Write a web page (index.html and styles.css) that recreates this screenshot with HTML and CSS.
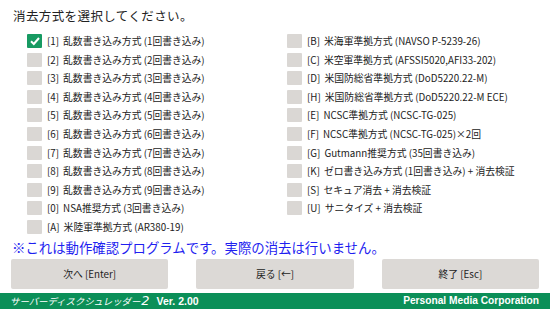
FILE: index.html
```html
<!DOCTYPE html>
<html lang="ja">
<head>
  <meta charset="UTF-8">
  <meta name="viewport" content="width=device-width, initial-scale=1.0">
  <title>消去方式の選択 – サーバーディスクシュレッダー2</title>
  <link rel="stylesheet" href="styles.css">
</head>
<body>
  <div class="screen">
    <h1 class="title">消去方式を選択してください。</h1>

    <div class="options">
      <ul class="col">
        <li class="opt checked"><span class="box"><svg viewBox="0 0 14 14" width="14" height="14"><polyline points="3,7.2 5.8,10 11,4" fill="none" stroke="#fff" stroke-width="2"/></svg></span><span class="key">[1]</span>乱数書き込み方式 (1回書き込み)</li>
        <li class="opt"><span class="box"></span><span class="key">[2]</span>乱数書き込み方式 (2回書き込み)</li>
        <li class="opt"><span class="box"></span><span class="key">[3]</span>乱数書き込み方式 (3回書き込み)</li>
        <li class="opt"><span class="box"></span><span class="key">[4]</span>乱数書き込み方式 (4回書き込み)</li>
        <li class="opt"><span class="box"></span><span class="key">[5]</span>乱数書き込み方式 (5回書き込み)</li>
        <li class="opt"><span class="box"></span><span class="key">[6]</span>乱数書き込み方式 (6回書き込み)</li>
        <li class="opt"><span class="box"></span><span class="key">[7]</span>乱数書き込み方式 (7回書き込み)</li>
        <li class="opt"><span class="box"></span><span class="key">[8]</span>乱数書き込み方式 (8回書き込み)</li>
        <li class="opt"><span class="box"></span><span class="key">[9]</span>乱数書き込み方式 (9回書き込み)</li>
        <li class="opt"><span class="box"></span><span class="key">[0]</span>NSA推奨方式 (3回書き込み)</li>
        <li class="opt"><span class="box"></span><span class="key">[A]</span>米陸軍準拠方式 (AR380-19)</li>
      </ul>
      <ul class="col">
        <li class="opt"><span class="box"></span><span class="key">[B]</span>米海軍準拠方式 (NAVSO P-5239-26)</li>
        <li class="opt"><span class="box"></span><span class="key">[C]</span>米空軍準拠方式 (AFSSI5020,AFI33-202)</li>
        <li class="opt"><span class="box"></span><span class="key">[D]</span>米国防総省準拠方式 (DoD5220.22-M)</li>
        <li class="opt"><span class="box"></span><span class="key">[H]</span>米国防総省準拠方式 (DoD5220.22-M ECE)</li>
        <li class="opt"><span class="box"></span><span class="key">[E]</span>NCSC準拠方式 (NCSC-TG-025)</li>
        <li class="opt"><span class="box"></span><span class="key">[F]</span>NCSC準拠方式 (NCSC-TG-025)×2回</li>
        <li class="opt"><span class="box"></span><span class="key">[G]</span>Gutmann推奨方式 (35回書き込み)</li>
        <li class="opt"><span class="box"></span><span class="key">[K]</span>ゼロ書き込み方式 (1回書き込み) + 消去検証</li>
        <li class="opt"><span class="box"></span><span class="key">[S]</span>セキュア消去 + 消去検証</li>
        <li class="opt"><span class="box"></span><span class="key">[U]</span>サニタイズ + 消去検証</li>
      </ul>
    </div>

    <p class="notice">※これは動作確認プログラムです。実際の消去は行いません。</p>

    <div class="buttons">
      <button type="button">次へ [Enter]</button>
      <button type="button">戻る [←]</button>
      <button type="button">終了 [Esc]</button>
    </div>

    <footer class="footer">
      <span class="product"><span class="name">サーバーディスクシュレッダー<span class="two">2</span></span><span class="ver">Ver. 2.00</span></span>
      <span class="company">Personal Media Corporation</span>
    </footer>
  </div>
</body>
</html>
```

FILE: styles.css
```css
body {
  margin: 0;
  padding: 0;
  background-color: #fff;
  font-family: "Noto Sans CJK JP", "Noto Sans", sans-serif;
  color: #222;
}
.screen {
  width: 550px;
  height: 309px;
  display: flex;
  flex-direction: column;
  overflow: hidden;
}
.title {
  margin: 0;
  padding: 5px 0 0 13px;
  font-size: 12.5px;
  font-weight: normal;
  line-height: 22px;
  letter-spacing: 0.4px;
}
.options {
  margin-top: 7px;
  padding-left: 27px;
  display: grid;
  grid-template-columns: 260px 1fr;
}
.col {
  list-style: none;
  margin: 0;
  padding: 0;
  display: flex;
  flex-direction: column;
  gap: 4.6px;
}
.opt {
  display: flex;
  align-items: center;
  height: 14px;
  font-size: 9.8px;
  white-space: nowrap;
}
.box {
  width: 15px;
  height: 14px;
  margin-right: 5px;
  background-color: #dad7d4;
  border-radius: 1px;
  display: flex;
  align-items: center;
  justify-content: center;
  flex-shrink: 0;
}
.checked .box {
  background-color: #179a62;
}
.key {
  margin-right: 4px;
}
.notice {
  margin: 5px 0 0 12px;
  font-size: 13.4px;
  line-height: 16px;
  color: #1f1ff0;
}
.buttons {
  margin-top: 4px;
  padding: 0 11px;
  display: flex;
  gap: 28px;
}
.buttons button {
  flex: 1;
  height: 30px;
  border: none;
  border-radius: 2px;
  background-color: #dcd9d6;
  font-family: "Noto Sans CJK JP", "Noto Sans", sans-serif;
  font-size: 9.8px;
  color: #222;
  padding: 0;
}
.footer {
  margin-top: 4px;
  height: 16px;
  background-color: #0b8f58;
  color: #fff;
  display: flex;
  align-items: center;
  justify-content: space-between;
  padding: 0 11px 0 10px;
}
.product {
  display: flex;
  align-items: center;
}
.name {
  font-size: 9.4px;
  font-style: italic;
}
.two {
  font-family: "DejaVu Sans", sans-serif;
  font-weight: 200;
  font-size: 13px;
  margin-left: 1px;
}
.ver {
  margin-left: 7px;
  font-family: "Liberation Sans", Arial, sans-serif;
  font-weight: bold;
  font-size: 10.5px;
}
.company {
  font-family: "Liberation Sans", Arial, sans-serif;
  font-weight: bold;
  font-size: 10.2px;
}
```
